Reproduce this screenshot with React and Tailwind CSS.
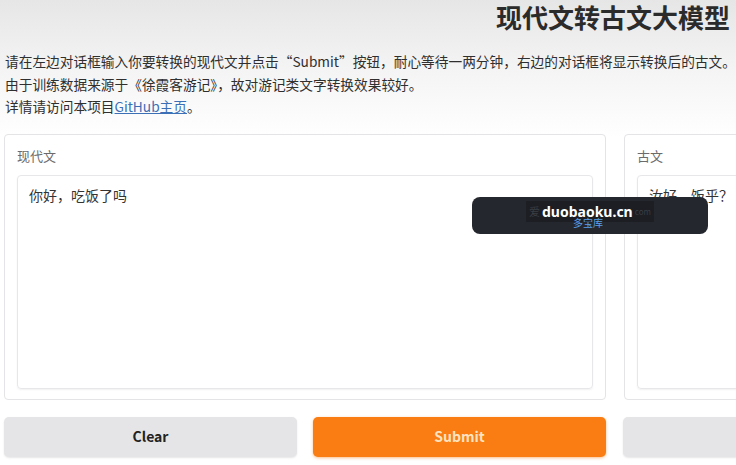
export default function App() {
  return (
    <div
      className="relative w-[736px] h-[465px] overflow-hidden bg-white text-[#333]"
      style={{ fontFamily: '"Noto Sans CJK SC", "Noto Sans", sans-serif' }}
    >
      {/* header band */}
      <div className="bg-gradient-to-b from-[#e6e6e6] via-[#f4f4f4] to-white pb-[20px]">
        <div className="flex justify-end pr-[6px]">
          <h1 className="text-[26px] font-bold leading-[34px] text-[#2b2b2b]">现代文转古文大模型</h1>
        </div>
        <div className="mt-[16px] pl-[5px] text-[13.7px] leading-[22.5px] text-[#2f2f2f] whitespace-nowrap">
          <p>请在左边对话框输入你要转换的现代文并点击“Submit”按钮，耐心等待一两分钟，右边的对话框将显示转换后的古文。</p>
          <p>由于训练数据来源于《徐霞客游记》，故对游记类文字转换效果较好。</p>
          <p>
            详情请访问本项目
            <span className="text-[#3b6fb6] underline">GitHub主页</span>。
          </p>
        </div>
      </div>

      {/* panels */}
      <div className="w-[1240px] pl-[4px] flex gap-[18px] -mt-[4px]">
        <div className="w-[602px] h-[266px] border border-[#e4e4e7] rounded-[4px] bg-white px-[12px] pt-[13px] pb-[10px] flex flex-col">
          <div className="text-[13px] text-[#6b6b6b] leading-[16px]">现代文</div>
          <div className="mt-[11px] flex-1 border border-[#e7e7ea] rounded-[4px] shadow-[0_1px_2px_rgba(0,0,0,0.06)] px-[11px] pt-[9px] text-[14px] text-[#333]">
            你好，吃饭了吗
          </div>
        </div>
        <div className="w-[602px] h-[266px] border border-[#e4e4e7] rounded-[4px] bg-white px-[12px] pt-[13px] pb-[10px] flex flex-col">
          <div className="text-[13px] text-[#6b6b6b] leading-[16px]">古文</div>
          <div className="mt-[11px] flex-1 border border-[#e7e7ea] rounded-[4px] shadow-[0_1px_2px_rgba(0,0,0,0.06)] px-[11px] pt-[9px] text-[14px] text-[#333]">
            汝好，饭乎？
          </div>
        </div>
      </div>

      {/* buttons */}
      <div className="w-[1240px] pl-[4px] mt-[17px] flex gap-[16px]">
        <button className="w-[293px] h-[40px] rounded-[5px] bg-[#e5e5e7] shadow-[0_1px_2px_rgba(0,0,0,0.1)] text-[14px] font-semibold text-[#222]">
          Clear
        </button>
        <button className="w-[293px] h-[40px] rounded-[5px] bg-[#f97d12] shadow-[0_1px_3px_rgba(249,125,18,0.5)] text-[14px] font-semibold text-[#fde3c0]">
          Submit
        </button>
        <button className="ml-[1px] w-[293px] h-[40px] rounded-[5px] bg-[#e5e5e7] shadow-[0_1px_2px_rgba(0,0,0,0.1)]"></button>
      </div>

      {/* watermark overlay */}
      <div className="absolute left-[472px] top-[197px] w-[236px] h-[37px] rounded-[8px] bg-[#24272e] flex items-center justify-center">
        <div className="flex items-center bg-[#1c1e23] w-[128px] h-[21px] -mt-[8px] px-[3px] gap-[2px]">
          <span className="text-[11px] leading-none text-[#3a3d44]">爱</span>
          <span className="text-[14px] font-bold text-white leading-none" style={{ fontFamily: '"Noto Sans", sans-serif' }}>
            duobaoku.cn
          </span>
          <span className="ml-auto text-[8px] leading-none text-[#3a3d44]">com</span>
        </div>
        <span className="absolute left-[101px] top-[20px] text-[10px] leading-[12px] text-[#5aa0ec]">多宝库</span>
      </div>
    </div>
  );
}
